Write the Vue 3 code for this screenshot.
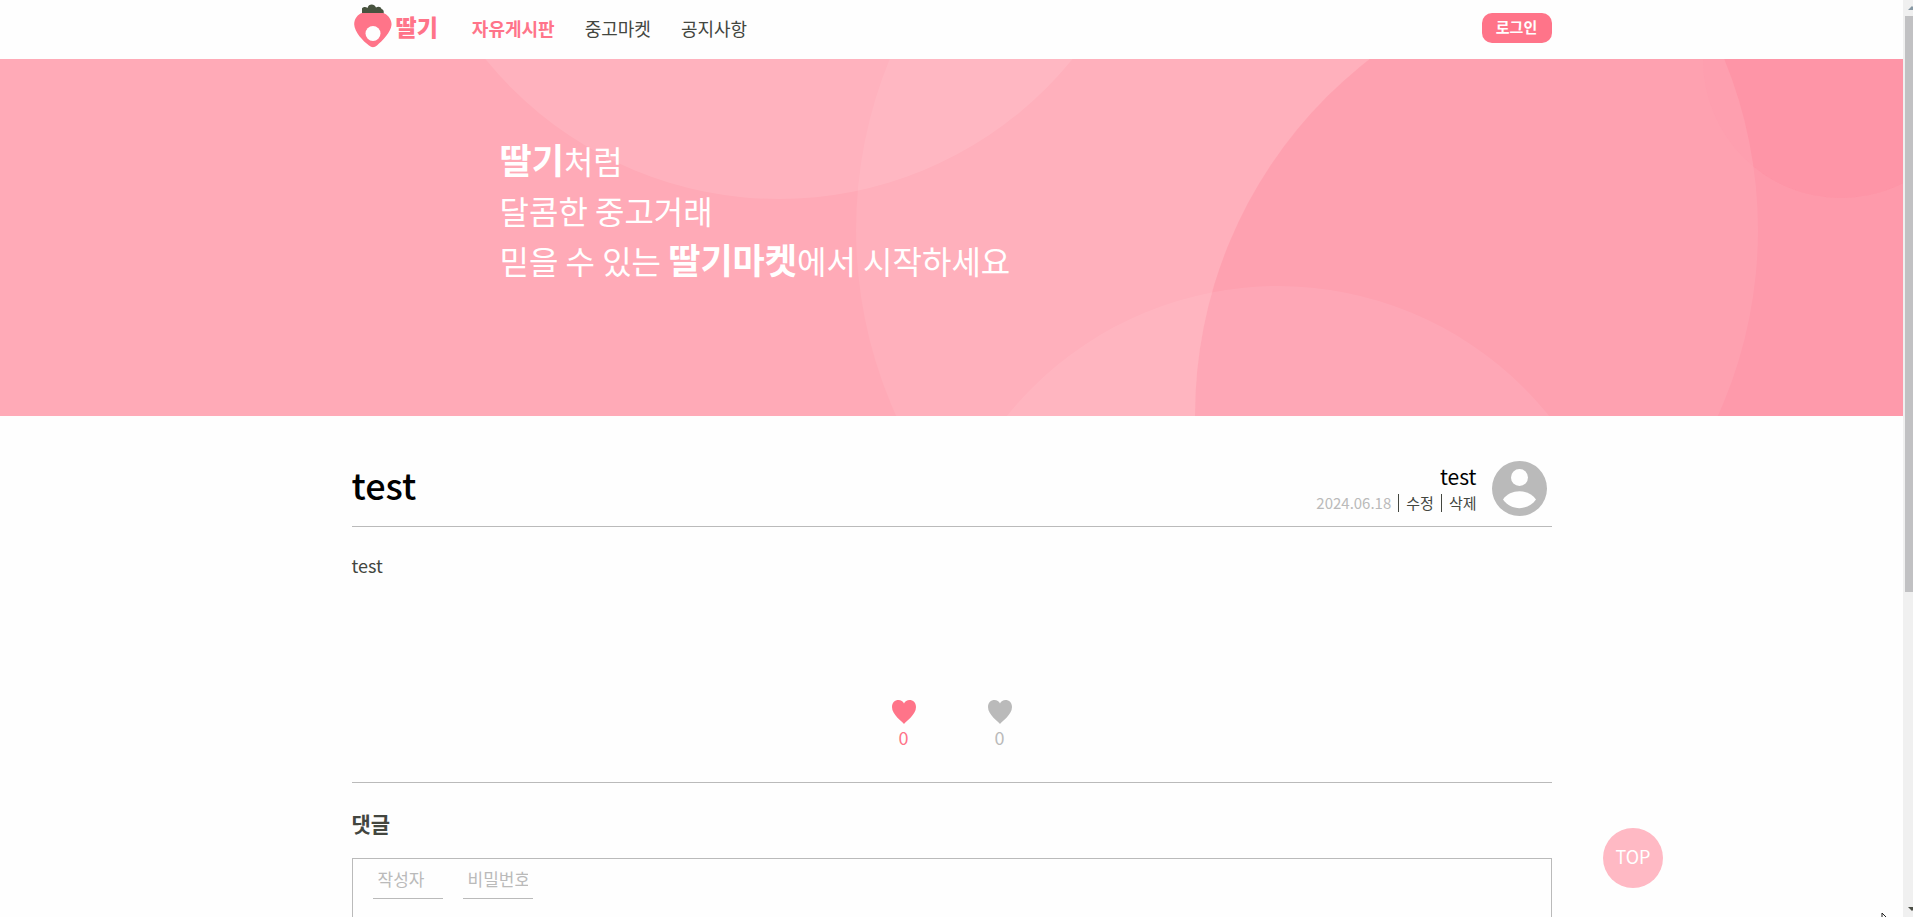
<script setup>
import { ref } from 'vue'

const menu = [
  { label: '자유게시판', active: true },
  { label: '중고마켓', active: false },
  { label: '공지사항', active: false }
]
const author = ref('')
const password = ref('')
const comment = ref('')
const likes = ref(0)
const dislikes = ref(0)
const heart = 'M12 24 C10 21 0 15 0 7 C0 2.500 3 0 6.500 0 C9 0 11 1.500 12 3.500 C13 1.500 15 0 17.500 0 C21 0 24 2.500 24 7 C24 15 14 21 12 24 Z'
</script>

<template>
  <div class="window">
    <div class="page">
      <header class="top">
        <div class="wrap top-row">
          <a class="logo" href="#">
            <svg width="38" height="44" viewBox="0 0 38 44" aria-hidden="true">
              <path fill="#48533f" d="M8 10 V4.500 C9 2.500 12 2.500 13.500 4 C14.500 -.5 20.500 -.5 22 3.500 C24 2 27 2.500 27.500 5 C30 5.500 30 8 29.500 10 Z" />
              <path fill="#ff7489" d="M8 9 H29 C33 10 38 15 37.500 21 C37 28 28 37 23 41.500 Q19 45 15 41.500 C9 37 .5 28 .2 20.500 C0 15 4 10 8 9 Z" />
              <circle cx="19" cy="29.500" r="7.500" fill="#fefefe" />
            </svg>
            <span>딸기</span>
          </a>
          <nav class="menu">
            <a v-for="item in menu" :key="item.label" href="#" :class="{ active: item.active }">{{ item.label }}</a>
          </nav>
          <button class="login" type="button">로그인</button>
        </div>
      </header>

      <section class="hero">
        <svg class="bubbles" viewBox="0 59 1903 357" preserveAspectRatio="xMidYMid slice" aria-hidden="true">
          <clipPath id="outside-large">
            <path clip-rule="evenodd" d="M0 0 H1903 V500 H0 Z M856 230 A451 451 0 0 0 1758 230 A451 451 0 0 0 856 230 Z" />
          </clipPath>
          <circle cx="779" cy="-179" r="378" fill="#fff" fill-opacity=".1" />
          <circle cx="1645" cy="415" r="450" fill="#fd748c" fill-opacity=".28" />
          <circle cx="1278" cy="634" r="348" fill="#fff" fill-opacity=".08" />
          <circle cx="1841" cy="60" r="138" fill="#ff6f88" fill-opacity=".05" />
          <circle cx="1841" cy="60" r="138" fill="#ff6f88" fill-opacity=".07" clip-path="url(#outside-large)" />
          <circle cx="1307" cy="230" r="451" fill="#fff" fill-opacity=".07" />
        </svg>
        <p class="slogan">
          <strong>딸기</strong>처럼<br />
          달콤한 중고거래<br />
          믿을 수 있는 <strong>딸기마켓</strong>에서 시작하세요
        </p>
      </section>

      <main class="wrap">
        <article>
          <div class="post-head">
            <h1>test</h1>
            <div class="byline">
              <p class="writer">test</p>
              <div class="meta">
                <time datetime="2024-06-18">2024.06.18</time>
                <a href="#">수정</a>
                <a href="#">삭제</a>
              </div>
            </div>
            <svg class="avatar" width="55" height="55" viewBox="0 0 55 55" aria-hidden="true">
              <circle cx="27.500" cy="27.500" r="27.500" fill="#bababa" />
              <circle cx="27.500" cy="16.500" r="8.500" fill="#fefefe" />
              <path fill="#fefefe" d="M11 38.500 C18 27.500 37 27.500 44 38.500 C36 50 19 50 11 38.500 Z" />
            </svg>
          </div>
          <p class="post-body">test</p>
          <div class="votes">
            <button class="like" type="button" aria-label="좋아요">
              <svg width="24" height="24" viewBox="0 0 24 24" aria-hidden="true"><path fill="currentColor" :d="heart" /></svg>
              <span>{{ likes }}</span>
            </button>
            <button type="button" aria-label="싫어요">
              <svg width="24" height="24" viewBox="0 0 24 24" aria-hidden="true"><path fill="currentColor" :d="heart" /></svg>
              <span>{{ dislikes }}</span>
            </button>
          </div>
        </article>

        <section class="comments">
          <h2>댓글</h2>
          <form class="comment-box" @submit.prevent>
            <div class="fields">
              <input v-model="author" type="text" placeholder="작성자" aria-label="작성자" />
              <input v-model="password" type="password" placeholder="비밀번호" aria-label="비밀번호" />
            </div>
            <textarea v-model="comment" rows="4" aria-label="댓글"></textarea>
          </form>
        </section>
      </main>

      <button class="to-top" type="button">TOP</button>
      <svg class="pointer" width="10" height="14" viewBox="0 0 10 14" aria-hidden="true">
        <path d="M1 0 V12 L4 9 L6 13 L8 12 L6 8 H9 Z" fill="#fff" stroke="#222" />
      </svg>
    </div>
    <div class="scrollbar" aria-hidden="true">
      <i class="arrow up"></i>
      <i class="thumb"></i>
      <i class="arrow down"></i>
    </div>
  </div>
</template>

<style>
body {
  background: #fefefe;
}
</style>

<style scoped>
.window {
  display: flex;
  height: 100vh;
  overflow: hidden;
  background: #fefefe;
  color: #43463f;
  font-family: "Noto Sans CJK KR", "Noto Sans", sans-serif;
  font-size: 18px;
  line-height: 24px;
}
.page {
  position: relative;
  flex: 1;
  overflow: hidden;
}
.wrap {
  width: 100%;
  max-width: 1200px;
  margin: 0 auto;
}
h1, h2, p {
  margin: 0;
}
a {
  color: inherit;
  text-decoration: none;
}
button, input, textarea {
  font: inherit;
  border: 0;
  padding: 0;
  margin: 0;
  background: none;
  outline: 0;
}
.top-row {
  display: flex;
  align-items: center;
  height: 56px;
  padding-bottom: 3px;
}
.logo {
  display: flex;
  align-items: center;
  gap: 4px;
  height: 52px;
  align-self: flex-start;
  margin-left: 2px;
  color: #ff7489;
  font-size: 23px;
  line-height: 22px;
  font-weight: 900;
}
.menu {
  display: flex;
  gap: 30px;
  margin-left: 34px;
}
.menu .active {
  color: #ff7489;
  font-weight: 700;
}
.login {
  margin-left: auto;
  width: 70px;
  height: 30px;
  border-radius: 10px;
  background: #ff7489;
  color: #fff;
  font-size: 15px;
  line-height: 24px;
  padding-bottom: 2px;
  font-weight: 700;
}
.hero {
  position: relative;
  height: 357px;
  background: #ffaab7;
  color: #fff;
}
.bubbles {
  position: absolute;
  inset: 0;
  width: 100%;
  height: 100%;
}
.slogan {
  position: relative;
  max-width: 904px;
  margin: 0 auto;
  padding-top: 76px;
  font-size: 32px;
  line-height: 50px;
}
.slogan strong {
  font-size: 35px;
  line-height: 1;
  font-weight: 700;
}
.post-head {
  display: flex;
  align-items: center;
  height: 110px;
  padding-right: 5px;
  border-bottom: 1px solid #bababa;
}
.post-head h1 {
  flex: 1;
  color: #000;
  font-size: 36px;
  font-weight: 500;
  line-height: 48px;
  padding-top: 26px;
}
.byline {
  padding: 30px 15px 0 0;
  text-align: right;
}
.writer {
  color: #000;
  font-size: 21px;
  line-height: 30px;
}
.meta {
  display: flex;
  align-items: center;
  font-size: 15px;
  line-height: 18px;
  padding-top: 3px;
}
.meta time {
  color: #bababa;
}
.meta a {
  margin-left: 7px;
  padding-left: 7px;
  border-left: 1px solid #43463f;
}
.avatar {
  margin-top: 34px;
}
.post-body {
  min-height: 144px;
  padding-top: 26px;
}
.votes {
  display: flex;
  justify-content: center;
  gap: 72px;
  padding: 3px 0 33px;
  border-bottom: 1px solid #bababa;
}
.votes button {
  display: flex;
  flex-direction: column;
  align-items: center;
  gap: 1px;
  color: #bababa;
}
.votes .like {
  color: #ff7489;
}
.comments h2 {
  padding: 27px 0 22px;
  font-size: 21px;
  line-height: 26px;
  font-weight: 700;
}
.comment-box {
  padding: 6px 20px 20px;
  border: 1px solid #bababa;
}
.fields {
  display: flex;
  gap: 20px;
}
.fields input {
  box-sizing: border-box;
  width: 70px;
  height: 34px;
  padding: 0 5px 6px;
  border-bottom: 1px solid #bababa;
  font-size: 17px;
}
.fields input::placeholder {
  color: #bababa;
  opacity: 1;
}
textarea {
  display: block;
  width: 100%;
  resize: none;
}
.to-top {
  position: absolute;
  right: 240px;
  bottom: 29px;
  width: 60px;
  height: 60px;
  padding-bottom: 5px;
  border-radius: 50%;
  background: #ffb9c4;
  color: #fff;
}
.pointer {
  position: absolute;
  right: 12px;
  bottom: -10px;
}
.scrollbar {
  display: flex;
  flex-direction: column;
  width: 10px;
  background: #f0f0f0;
}
.thumb {
  height: 576px;
  margin: 6px 0 auto 2px;
  background: #c1c1c3;
}
.arrow {
  width: 0;
  margin-left: 5px;
  border: solid transparent;
  border-width: 0 4px;
}
.up {
  margin-top: 6px;
  border-bottom: 4px solid #8698a4;
}
.down {
  margin-bottom: 6px;
  border-top: 4px solid #4a4d45;
}
</style>
